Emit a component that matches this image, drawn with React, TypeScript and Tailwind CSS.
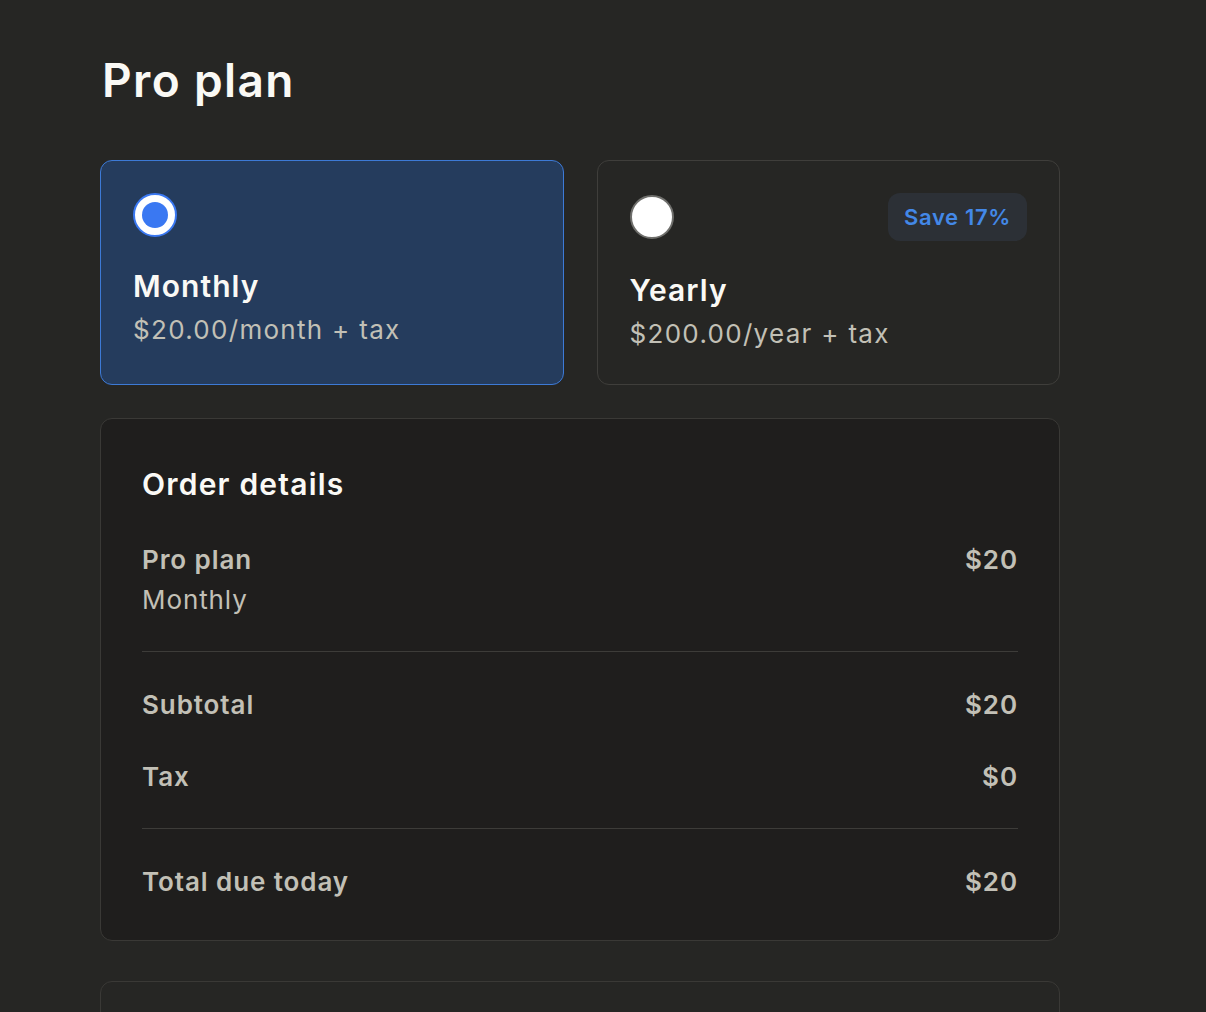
import * as React from "react";

type PlanOption = {
  id: string;
  name: string;
  price: string;
  badge?: string;
};

const plans: PlanOption[] = [
  { id: "monthly", name: "Monthly", price: "$20.00/month + tax" },
  { id: "yearly", name: "Yearly", price: "$200.00/year + tax", badge: "Save 17%" },
];

const Radio = ({ checked }: { checked: boolean }) =>
  checked ? (
    <span className="flex h-[44px] w-[44px] shrink-0 items-center justify-center rounded-full border-2 border-[#3a78f2] bg-white">
      <span className="h-[26px] w-[26px] rounded-full bg-[#3a78f2]" />
    </span>
  ) : (
    <span className="h-[44px] w-[44px] shrink-0 rounded-full border-2 border-[#6f6f6c] bg-white" />
  );

const Row = ({ label, value }: { label: string; value: string }) => (
  <div className="flex items-center justify-between text-[26px] font-semibold leading-[40px] tracking-[0.035em] text-[#c2c0b6]">
    <span>{label}</span>
    <span>{value}</span>
  </div>
);

export default function App() {
  const [selected, setSelected] = React.useState("monthly");

  return (
    <div
      className="min-h-screen bg-[#262624] pl-[100px] pt-[52px] text-[#faf9f5]"
      style={{ fontFamily: "Inter, 'Noto Sans', sans-serif" }}
    >
      <div className="w-[960px]">
        <h1 className="pl-[2px] text-[46px] font-semibold leading-[56px] tracking-[0.03em]">Pro plan</h1>

        <div className="mt-[52px] grid grid-cols-2 gap-[33px]">
          {plans.map((plan) => {
            const active = selected === plan.id;
            return (
              <button
                key={plan.id}
                onClick={() => setSelected(plan.id)}
                className={
                  active
                    ? "flex flex-col rounded-[12px] border border-[#3d7ad6] bg-[#253c5d] px-8 pt-8 pb-[30px] text-left"
                    : "flex flex-col rounded-[12px] border border-[#3f3e3b] bg-[#262624] px-8 pt-8 pb-[30px] text-left"
                }
              >
                <div className="flex items-center justify-between">
                  <Radio checked={active} />
                  {plan.badge && (
                    <span className="flex h-[48px] items-center rounded-[12px] bg-[#2c3036] px-[16px] text-[22px] font-semibold tracking-[0.03em] text-[#4388e8]">
                      {plan.badge}
                    </span>
                  )}
                </div>
                <div className="mt-[29px] text-[30px] font-semibold leading-[40px] tracking-[0.035em] text-[#faf9f5]">
                  {plan.name}
                </div>
                <div className="mt-[4px] text-[26px] leading-[40px] tracking-[0.05em] text-[#c2c0b6]">{plan.price}</div>
              </button>
            );
          })}
        </div>

        <div className="mt-[33px] rounded-[12px] border border-[#3a3936] bg-[#1f1e1d] px-[41px] pt-[41px] pb-[38px]">
          <h2 className="text-[30px] font-semibold leading-[48px] tracking-[0.04em] text-[#faf9f5]">Order details</h2>

          <div className="mt-[32px] flex items-start justify-between text-[26px] leading-[40px] tracking-[0.035em] text-[#c2c0b6]">
            <div>
              <div className="font-semibold">Pro plan</div>
              <div>Monthly</div>
            </div>
            <div className="font-semibold">$20</div>
          </div>

          <div className="mt-[31px] border-t border-[#3d3c39]" />

          <div className="mt-[33px] flex flex-col gap-[32px]">
            <Row label="Subtotal" value="$20" />
            <Row label="Tax" value="$0" />
          </div>

          <div className="mt-[31px] border-t border-[#3d3c39]" />

          <div className="mt-[33px]">
            <Row label="Total due today" value="$20" />
          </div>
        </div>

        <div className="mt-[40px] h-[120px] rounded-[12px] border border-[#3a3936] bg-[#262624]" />
      </div>
    </div>
  );
}
